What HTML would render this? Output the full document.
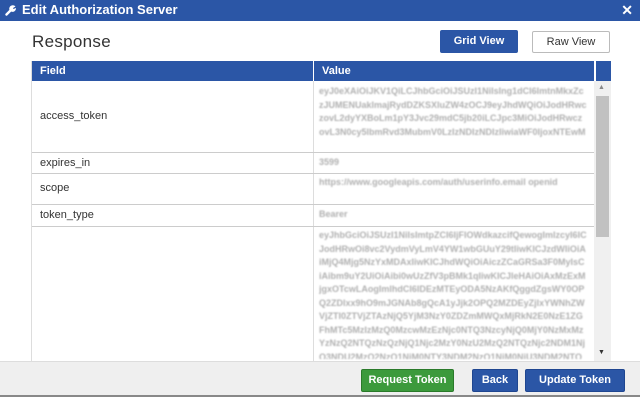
<!DOCTYPE html>
<html><head><style>
*{margin:0;padding:0;box-sizing:border-box}
body{width:640px;height:400px;overflow:hidden;background:#fff;font-family:"Liberation Sans",sans-serif;position:relative}
.title{position:absolute;left:0;top:0;width:640px;height:21px;background:#2b56a6;color:#fff;font-weight:bold;font-size:13px;line-height:20px;padding-left:22px}
.close{position:absolute;right:7px;top:0;color:#fff;font-size:14px;font-weight:bold}
h1{position:absolute;left:32px;top:32px;font-size:17px;font-weight:normal;color:#333;letter-spacing:.3px}
.btn{position:absolute;font-size:11px;text-align:center;border-radius:2px}
.grid{left:440px;top:30px;width:78px;height:23px;line-height:23px;background:#2b56a6;color:#fff;font-weight:bold}
.raw{left:532px;top:31px;width:78px;height:22px;line-height:21px;background:#fff;color:#333;border:1px solid #bbb}
.tbl{position:absolute;left:31px;top:61px;width:579px;height:300px;border-left:1px solid #ddd}
.hdr{position:absolute;top:0;height:20px;background:#2b56a6;color:#fff;font-weight:bold;font-size:11px;line-height:20px;padding-left:8px}
.row{position:absolute;left:0;width:562px;border-bottom:1px solid #ccc}
.f{position:absolute;left:8px;font-size:11px;color:#333}
.v{position:absolute;left:287px;width:268px;font-size:9px;font-weight:bold;line-height:13.5px;color:#b0b0b0;filter:blur(0.9px);word-break:break-all;overflow:hidden}
.vline{position:absolute;left:281px;top:20px;width:1px;height:280px;background:#ddd}
.sb{position:absolute;left:562px;top:20px;width:17px;height:280px;background:#f0f0f0}
.thumb{position:absolute;left:564px;top:35px;width:13px;height:141px;background:#c1c1c1}
.footer{position:absolute;left:0;top:361px;width:640px;height:36px;background:#efefef;border-top:1px solid #ddd;border-bottom:2px solid #888}
.b2{position:absolute;top:369px;height:23px;line-height:21px;font-size:11px;font-weight:bold;color:#fff;text-align:center;border-radius:2px}
</style></head><body>
<div class="title"><svg style="position:absolute;left:5px;top:4px" width="12" height="12" viewBox="0 0 12 12"><path d="M1.5 10.5 L6 6" stroke="#fff" stroke-width="2.4" stroke-linecap="round"/><path d="M5 7 A3.5 3.5 0 0 1 10.5 2.5 L8 4 L8.5 5 L11 4 A3.5 3.5 0 0 1 6 7.5 Z" fill="#fff"/></svg>Edit Authorization Server<span class="close">✕</span></div>
<h1>Response</h1>
<div class="btn grid">Grid View</div>
<div class="btn raw">Raw View</div>
<div class="tbl">
<div class="hdr" style="left:0;width:281px">Field</div>
<div class="hdr" style="left:282px;width:280px">Value</div>
<div class="hdr" style="left:563px;width:16px;padding:0;border-left:1px solid #fff"></div>
<div class="vline"></div>
<div class="row" style="top:20px;height:72px"><div class="f" style="top:29px">access_token</div>
<div class="v" style="top:4px;height:55px">eyJ0eXAiOiJKV1QiLCJhbGciOiJSUzI1NiIsIng1dCI6ImtnMkxZczJUMENUaklmajRydDZKSXluZW4zOCJ9eyJhdWQiOiJodHRwczovL2dyYXBoLm1pY3Jvc29mdC5jb20iLCJpc3MiOiJodHRwczovL3N0cy5lbmRvd3MubmV0LzIzNDIzNDIzIiwiaWF0IjoxNTEwMzc4NzQ0LCJuYmYiOjE1</div></div>
<div class="row" style="top:92px;height:21px"><div class="f" style="top:4px">expires_in</div><div class="v" style="top:3px">3599</div></div>
<div class="row" style="top:113px;height:31px"><div class="f" style="top:8px">scope</div><div class="v" style="top:2px;width:250px">https://www.googleapis.com/auth/userinfo.email openid</div></div>
<div class="row" style="top:144px;height:22px"><div class="f" style="top:4px">token_type</div><div class="v" style="top:3px">Bearer</div></div>
<div class="v" style="top:168px;height:130px">eyJhbGciOiJSUzI1NiIsImtpZCI6IjFlOWdkazcifQewogImlzcyI6ICJodHRwOi8vc2VydmVyLmV4YW1wbGUuY29tIiwKICJzdWIiOiAiMjQ4Mjg5NzYxMDAxIiwKICJhdWQiOiAiczZCaGRSa3F0MyIsCiAibm9uY2UiOiAibi0wUzZfV3pBMk1qIiwKICJleHAiOiAxMzExMjgxOTcwLAogImlhdCI6IDEzMTEyODA5NzAKfQggdZgsWY0OPQ2ZDlxx9hO9mJGNAb8gQcA1yJjk2OPQ2MZDEyZjlxYWNhZWVjZTI0ZTVjZTAzNjQ5YjM3NzY0ZDZmMWQxMjRkN2E0NzE1ZGFhMTc5MzIzMzQ0MzcwMzEzNjc0NTQ3NzcyNjQ0MjY0NzMxMzYzNzQ2NTQzNzQzNjQ1Njc2MzY0NzU2MzQ2NTQzNjc2NDM1NjQ3NDU2MzQ2NzQ1NjM0NTY3NDM2NzQ1NjM0NjU3NDM2NTQ3</div>
<div class="sb"></div><div class="thumb"></div>
<div style="position:absolute;left:566px;top:23px;font-size:7px;color:#888">▲</div>
<div style="position:absolute;left:566px;top:288px;font-size:7px;color:#333">▼</div>
</div>
<div class="footer"></div>
<div class="b2" style="left:361px;width:93px;background:#3c9a3c;border:1px solid #2a7a2a">Request Token</div>
<div class="b2" style="left:472px;width:46px;background:#2b56a6;border:1px solid #1f4690">Back</div>
<div class="b2" style="left:525px;width:100px;background:#2b56a6;border:1px solid #1f4690">Update Token</div>
</body></html>
